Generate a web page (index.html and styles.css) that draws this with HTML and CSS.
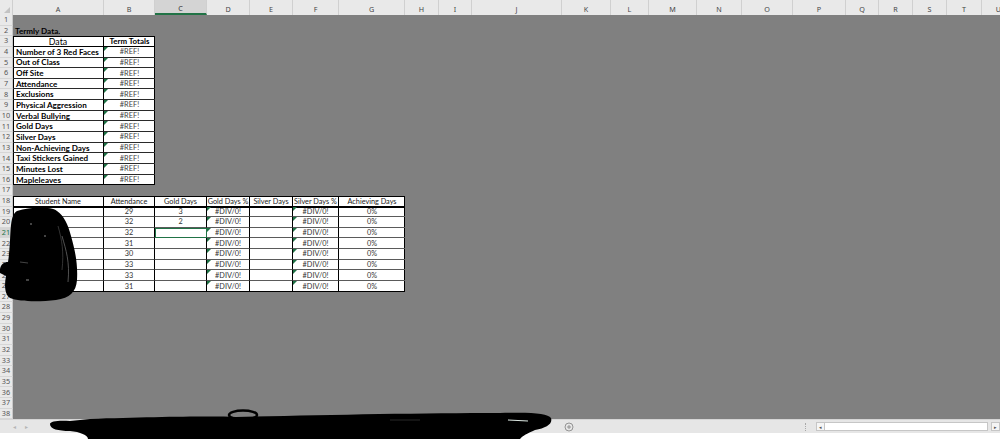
FILE: index.html
```html
<!DOCTYPE html>
<html>
<head>
<meta charset="utf-8">
<link rel="stylesheet" href="styles.css">
</head>
<body>
<div class="page">
  <div class="sheet">
    <div class="corner"></div>
    <div class="ch">A</div><div class="ch">B</div><div class="ch ch-sel">C</div><div class="ch">D</div><div class="ch">E</div><div class="ch">F</div><div class="ch">G</div><div class="ch">H</div><div class="ch">I</div><div class="ch">J</div><div class="ch">K</div><div class="ch">L</div><div class="ch">M</div><div class="ch">N</div><div class="ch">O</div><div class="ch">P</div><div class="ch">Q</div><div class="ch">R</div><div class="ch">S</div><div class="ch">T</div><div class="ch">U</div>

    <div class="rh">1</div><div class="rh">2</div><div class="rh">3</div><div class="rh">4</div><div class="rh">5</div><div class="rh">6</div><div class="rh">7</div><div class="rh">8</div><div class="rh">9</div><div class="rh">10</div>
    <div class="rh">11</div><div class="rh">12</div><div class="rh">13</div><div class="rh">14</div><div class="rh">15</div><div class="rh">16</div><div class="rh">17</div><div class="rh">18</div><div class="rh">19</div><div class="rh">20</div>
    <div class="rh rh-sel">21</div><div class="rh">22</div><div class="rh">23</div><div class="rh">24</div><div class="rh">25</div><div class="rh">26</div><div class="rh">27</div><div class="rh">28</div><div class="rh">29</div><div class="rh">30</div>
    <div class="rh">31</div><div class="rh">32</div><div class="rh">33</div><div class="rh">34</div><div class="rh">35</div><div class="rh">36</div><div class="rh">37</div><div class="rh">38</div>

    <div class="title">Termly Data.</div>

    <div class="t1">
      <div class="c hd">Data</div><div class="c hd hd-b">Term Totals</div>
      <div class="c lbl">Number of 3 Red Faces</div><div class="c val err">#REF!</div>
      <div class="c lbl">Out of Class</div><div class="c val err">#REF!</div>
      <div class="c lbl">Off Site</div><div class="c val err">#REF!</div>
      <div class="c lbl">Attendance</div><div class="c val err">#REF!</div>
      <div class="c lbl">Exclusions</div><div class="c val err">#REF!</div>
      <div class="c lbl">Physical Aggression</div><div class="c val err">#REF!</div>
      <div class="c lbl">Verbal Bullying</div><div class="c val err">#REF!</div>
      <div class="c lbl">Gold Days</div><div class="c val err">#REF!</div>
      <div class="c lbl">Silver Days</div><div class="c val err">#REF!</div>
      <div class="c lbl">Non-Achieving Days</div><div class="c val err">#REF!</div>
      <div class="c lbl">Taxi Stickers Gained</div><div class="c val err">#REF!</div>
      <div class="c lbl">Minutes Lost</div><div class="c val err">#REF!</div>
      <div class="c lbl last">Mapleleaves</div><div class="c val err last">#REF!</div>
    </div>

    <div class="t2">
      <div class="t2-head">
        <div class="h">Student Name</div><div class="h">Attendance</div><div class="h">Gold Days</div><div class="h">Gold Days %</div><div class="h">Silver Days</div><div class="h">Silver Days %</div><div class="h">Achieving Days</div>
      </div>
      <div class="t2-body">
        <div class="d"></div><div class="d">29</div><div class="d">3</div><div class="d err">#DIV/0!</div><div class="d"></div><div class="d err">#DIV/0!</div><div class="d">0%</div>
        <div class="d"></div><div class="d">32</div><div class="d">2</div><div class="d err">#DIV/0!</div><div class="d"></div><div class="d err">#DIV/0!</div><div class="d">0%</div>
        <div class="d"></div><div class="d">32</div><div class="d d-sel"></div><div class="d err">#DIV/0!</div><div class="d"></div><div class="d err">#DIV/0!</div><div class="d">0%</div>
        <div class="d"></div><div class="d">31</div><div class="d"></div><div class="d err">#DIV/0!</div><div class="d"></div><div class="d err">#DIV/0!</div><div class="d">0%</div>
        <div class="d"></div><div class="d">30</div><div class="d"></div><div class="d err">#DIV/0!</div><div class="d"></div><div class="d err">#DIV/0!</div><div class="d">0%</div>
        <div class="d"></div><div class="d">33</div><div class="d"></div><div class="d err">#DIV/0!</div><div class="d"></div><div class="d err">#DIV/0!</div><div class="d">0%</div>
        <div class="d"></div><div class="d">33</div><div class="d"></div><div class="d err">#DIV/0!</div><div class="d"></div><div class="d err">#DIV/0!</div><div class="d">0%</div>
        <div class="d last"></div><div class="d last">31</div><div class="d last"></div><div class="d err last">#DIV/0!</div><div class="d last"></div><div class="d err last">#DIV/0!</div><div class="d last">0%</div>
      </div>
    </div>
  </div>

  <div class="tabbar">
    <div class="nav"><span class="arrow">&#9666;</span><span class="arrow">&#9656;</span></div>
    <div class="tabs"></div>
    <div class="add">
      <svg width="10" height="10" viewBox="0 0 10 10"><circle cx="5" cy="5" r="4" fill="none" stroke="#8a8a8a" stroke-width="0.9"/><path d="M5 3v4M3 5h4" stroke="#8a8a8a" stroke-width="0.9"/></svg>
    </div>
    <div class="spacer"></div>
    <div class="split"></div>
    <div class="hscroll">
      <div class="sbtn">&#9666;</div>
      <div class="track"></div>
      <div class="sbtn">&#9656;</div>
    </div>
  </div>

  <svg class="scribble" viewBox="0 0 1000 439" width="1000" height="439">
    <path d="M17,211 C30,207 50,206 57,211 C64,216 68,224 71,236 C75,250 78,264 77,280 C76,292 70,298 56,300 C40,302 20,302 10,298 C5,295 4,286 6,276 L0,273 C-1,266 3,262 8,262 C10,250 10,235 11,225 C12,216 14,213 17,211 Z" fill="#000"/>
    <path d="M62,236 C66,250 70,262 68,282" stroke="#666" stroke-width="0.8" fill="none"/>
    <path d="M58,226 C62,240 64,252 62,270" stroke="#555" stroke-width="0.6" fill="none"/>
    <path d="M20,262 L28,263" stroke="#555" stroke-width="0.8"/>
    <path d="M30,224 L32,224 M44,236 L46,236 M26,280 L29,280" stroke="#888" stroke-width="1"/>
    <path d="M50,424 C50,421 60,420 70,421 L90,419 C150,417 210,416 236,417 C320,415 420,413 500,413 C530,412 548,413 551,418 C553,424 546,428 535,430 C528,433 522,436 520,439 L88,439 C88,435 80,432 70,431 C58,431 50,429 50,424 Z" fill="#000"/>
    <ellipse cx="243" cy="415" rx="14" ry="4.5" fill="none" stroke="#000" stroke-width="2.5"/>
    <path d="M508,420 L528,421" stroke="#dde8e2" stroke-width="1.2"/>
    <path d="M390,420 L420,420" stroke="#444" stroke-width="0.6"/>
  </svg>
</div>
</body>
</html>
```

FILE: styles.css
```css
* { box-sizing: border-box; }

html, body {
  margin: 0;
  padding: 0;
  background: #ffffff;
}

.page {
  position: relative;
  width: 1000px;
  height: 439px;
  overflow: hidden;
  font-family: Lato, "Liberation Sans", sans-serif;
}

.sheet {
  display: grid;
  grid-template-columns: 13px 91px 51px 52px 43px 43px 46px 66px 34px 33px 90px 49px 38px 48px 45px 51px 53px 33px 34px 34px 35px 34px;
  grid-template-rows: 15px repeat(38, 10.65px);
  width: 1000px;
  background: #808080;
  overflow: hidden;
}

.corner {
  position: relative;
  background: #e9e9e9;
  border-right: 1px solid #cfcfcf;
}
.corner::after {
  content: "";
  position: absolute;
  right: 2px;
  bottom: 2px;
  border-left: 6px solid transparent;
  border-bottom: 6px solid #c3c3c3;
}

.ch {
  background: #e9e9e9;
  border-right: 1px solid #d0d0d0;
  color: #454545;
  font-family: "Noto Sans", sans-serif;
  font-size: 7.2px;
  display: flex;
  align-items: center;
  justify-content: center;
  padding-top: 2px;
}
.ch-sel {
  background: #d4d4d4;
  border-bottom: 2px solid #217346;
  color: #333;
}

.rh {
  grid-column: 1;
  background: #e9e9e9;
  border-bottom: 1px solid #d6d6d6;
  border-right: 1px solid #c9c9c9;
  color: #555;
  font-family: "Noto Sans", sans-serif;
  font-size: 7.3px;
  display: flex;
  align-items: center;
  justify-content: center;
  line-height: 1;
}
.rh-sel {
  background: #d4d4d4;
  color: #217346;
}

.title {
  grid-row: 3;
  grid-column: 2 / 4;
  font-weight: 700;
  font-size: 8.1px;
  color: #000;
  display: flex;
  align-items: center;
  padding-left: 2px;
}

/* Table 1 */
.t1 {
  grid-row: 4 / 18;
  grid-column: 2 / 4;
  display: grid;
  grid-template-columns: 91px 51px;
  grid-template-rows: repeat(14, 1fr);
  background: #fff;
  outline: 1.6px solid #000;
  outline-offset: -1px;
}
.c {
  position: relative;
  display: flex;
  align-items: center;
  border-bottom: 1px solid #2a2a2a;
  font-size: 8.1px;
  color: #000;
  white-space: nowrap;
  overflow: hidden;
}
.c.last { border-bottom: none; }
.hd {
  justify-content: center;
  font-size: 8.8px;
  border-right: 1.6px solid #000;
  border-bottom: 1.4px solid #000;
}
.hd-b {
  font-weight: 700;
  font-size: 7.9px;
  border-right: none;
}
.lbl {
  font-weight: 700;
  padding-left: 3px;
  border-right: 1.6px solid #000;
}
.val {
  justify-content: center;
  font-size: 7.4px;
  color: #444;
}

.err::before {
  content: "";
  position: absolute;
  top: 0;
  left: 0;
  border-top: 4px solid #1e7145;
  border-right: 4px solid transparent;
}

/* Table 2 */
.t2 {
  grid-row: 19 / 28;
  grid-column: 2 / 9;
  display: flex;
  flex-direction: column;
}
.t2-head {
  height: 10.65px;
  display: grid;
  grid-template-columns: 91px 51px 52px 43px 43px 46px 66px;
  background: #fff;
  outline: 1.6px solid #000;
  outline-offset: -1px;
}
.h {
  display: flex;
  align-items: center;
  justify-content: center;
  border-right: 1px solid #000;
  font-size: 7.3px;
  color: #222;
  white-space: nowrap;
  overflow: hidden;
}
.h:last-child { border-right: none; }

.t2-body {
  flex: 1;
  display: grid;
  grid-template-columns: 91px 51px 52px 43px 43px 46px 66px;
  grid-template-rows: repeat(8, 1fr);
  background: #fff;
  outline: 1.6px solid #000;
  outline-offset: -1px;
}
.d {
  position: relative;
  display: flex;
  align-items: center;
  justify-content: center;
  border-right: 1px solid #000;
  border-bottom: 1px solid #5a5a5a;
  font-size: 7.3px;
  color: #333;
  white-space: nowrap;
}
.d:nth-child(7n) { border-right: none; }
.d.last { border-bottom: none; }
.d-sel {
  outline: 1.6px solid #217346;
  outline-offset: -1px;
}

/* Tab bar */
.tabbar {
  display: flex;
  align-items: center;
  height: 14px;
  background: #e6e6e6;
  border-top: 1px solid #d5d5d5;
}
.nav {
  width: 52px;
  display: flex;
  gap: 9px;
  padding-left: 13px;
}
.arrow {
  font-size: 6px;
  color: #b5b5b5;
}
.tabs {
  width: 512px;
  height: 100%;
}
.add {
  width: 12px;
  display: flex;
  align-items: center;
}
.add svg { display: block; }
.spacer { flex: 1; }
.split {
  width: 2px;
  height: 8px;
  margin-right: 9px;
  border-left: 1px dotted #a8a8a8;
}
.hscroll {
  width: 184px;
  height: 9px;
  display: flex;
  align-items: stretch;
}
.sbtn {
  width: 9px;
  border: 1px solid #c6c6c6;
  background: #f5f5f5;
  font-size: 5px;
  color: #555;
  display: flex;
  align-items: center;
  justify-content: center;
}
.track {
  flex: 1;
  background: #ffffff;
  border: 1px solid #c6c6c6;
  border-left: none;
  margin-right: 3px;
}

.scribble {
  position: absolute;
  top: 0;
  left: 0;
  pointer-events: none;
}
```
